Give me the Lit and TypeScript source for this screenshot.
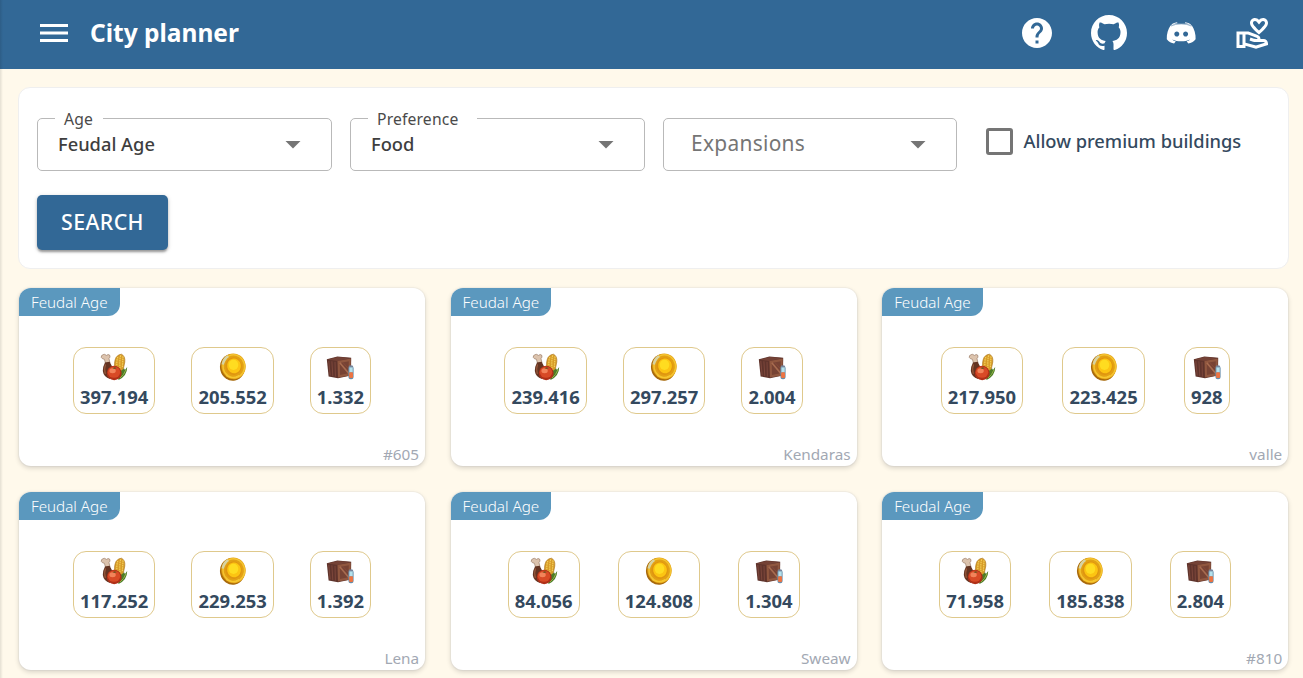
import { LitElement, html, css, svg } from "lit";
import { customElement, property } from "lit/decorators.js";

const food = svg`
  <path d="M1.6 2.6 Q.4 4.6 2.6 5.8 L4.4 6.3 L5.4 10 L10 10 L9 5.6 Q10.8 4.2 9.6 2 Q8 .8 6.6 2.4 Q4 .6 3.2 1.6Z" fill="#dcc3ad" stroke="#8e6f59" stroke-width=".6"/>
  <path d="M5 9.5 L9.6 8.8 Q12 13 13 16 L10 26 Q3.6 24 2.8 18 Q2.6 14 5 9.5Z" fill="#643422"/>
  <path d="M5.6 11.5 Q3.8 16 5.4 21" fill="none" stroke="#94573a" stroke-width="1.2"/>
  <path d="M15 18 Q13.6 9 16 4.6 Q17.8 1.4 21.4 1.2 Q25.4 3 24.8 9 Q24 16 21 21Z" fill="#d79c28" stroke="#a77118" stroke-width=".6"/>
  <path d="M17.8 4 Q16.2 9 17.2 15 M20.6 2.4 Q19.2 9 20.2 17 M23 3.4 Q22.6 9 22.4 15" fill="none" stroke="#f3cf5c" stroke-width="1.2" stroke-dasharray="1.5 .8"/>
  <path d="M27.2 14 Q27.2 23 18.5 27 Q17.5 22 20.5 18 Q23 17 24 15.3 L25 17Z" fill="#4d7b28"/>
  <path d="M25.8 17 Q24 22 20 25" fill="none" stroke="#8fb348" stroke-width="1"/>
  <ellipse cx="14.2" cy="20" rx="7.5" ry="7.2" fill="#b03018"/>
  <ellipse cx="14" cy="19.2" rx="6.2" ry="5.6" fill="#d84a26"/>
  <ellipse cx="12.6" cy="17.8" rx="3.2" ry="2.5" fill="#f2835a"/>
  <path d="M12.4 15.2 L14.6 14.2 L16.8 15.1 L14.8 15.9Z" fill="#6d5520"/>`;

const coin = svg`
  <ellipse cx="13.4" cy="14.3" rx="12.4" ry="13.4" transform="rotate(-12 13.4 14.3)" fill="#a86a0c"/>
  <ellipse cx="14.5" cy="13.3" rx="12.2" ry="12.9" transform="rotate(-12 14.5 13.3)" fill="#e3a114"/>
  <ellipse cx="14.8" cy="13.3" rx="10.8" ry="11.5" transform="rotate(-12 14.8 13.3)" fill="none" stroke="#f4c431" stroke-width="1.4"/>
  <path d="M2.5 11.2 Q3.6 4.8 8.4 2.2 L10 4 Q6 7 5 11.8Z" fill="#d7d3a2"/>
  <ellipse cx="14.6" cy="13.2" rx="8.2" ry="8.7" transform="rotate(-12 14.6 13.2)" fill="#df9510"/>
  <ellipse cx="15" cy="12.9" rx="6.9" ry="7.4" transform="rotate(-12 15 12.9)" fill="#fcc412"/>
  <ellipse cx="14.5" cy="11.8" rx="4.8" ry="5.1" fill="#ffdc20"/>
  <path d="M7 22.5 Q13 26.5 20 22.5" fill="none" stroke="#f8c92d" stroke-width="1"/>`;

const crate = svg`
  <path d="M.8 6.2 L11.4 3.5 L25.2 4.7 L25 22.6 L12 25.2 L2.6 23.4Z" fill="#5f342c"/>
  <path d="M1.3 6.6 L12 4.1 L24.6 5.1 L11.6 8Z" fill="#744236"/>
  <path d="M11.5 8 L24.8 5.6 L24.4 22.4 L12 24.6Z" fill="#90573f"/>
  <path d="M13.8 10 L22.8 8.2 L22.4 20.2 L14 22Z" fill="#774334"/>
  <path d="M13.8 9.8 L22.8 20.4" stroke="#a86c50" stroke-width="1.6"/>
  <path d="M17 9.6 L22.8 16" stroke="#85493a" stroke-width="1"/>
  <path d="M2.8 8 L4.2 22.4 M5.9 8.3 L6.8 23 M9 8.8 L9.4 23.6" stroke="#7c463b" stroke-width="1"/>
  <rect x="22.4" y="12.8" width="5.2" height="13.4" rx="2.3" fill="#668ca9"/>
  <rect x="23.4" y="14.2" width="3.3" height="5.2" fill="#b5e1ec"/>
  <rect x="23.1" y="19.2" width="3.9" height="5.8" rx="1" fill="#ec7443"/>
  <rect x="22.8" y="12.6" width="4.2" height="1.6" rx=".8" fill="#77849b"/>`;

const PICTURES = [food, coin, crate];

@customElement("plan-card")
export class PlanCard extends LitElement {
  @property() age = "";
  @property() owner = "";
  @property({ attribute: false }) stats: string[] = [];

  static styles = css`
    :host {
      display: flex;
      flex-direction: column;
      box-sizing: border-box;
      height: 178px;
      background: #fff;
      border-radius: 12px;
      box-shadow: 0 0 0 1px rgba(90, 120, 150, 0.05), 0 2px 5px rgba(0, 0, 0, 0.16);
    }
    .age {
      align-self: flex-start;
      box-sizing: border-box;
      height: 28px;
      padding: 0 12px;
      line-height: 28px;
      border-radius: 12px 0 12px 0;
      background: #5b98be;
      color: #fff;
      font-size: 15.2px;
      font-weight: 300;
    }
    .stats {
      display: grid;
      grid-template-columns: 1.5fr auto 1fr auto 1fr auto 1.5fr;
      margin-top: 31px;
    }
    .stat {
      box-sizing: border-box;
      height: 67px;
      padding: 5px 6.1px 0;
      border: 1px solid #dfc98c;
      border-radius: 13px;
      display: flex;
      flex-direction: column;
      align-items: center;
      font-size: 18.4px;
      line-height: 32px;
      font-weight: 700;
      color: #34495e;
    }
    .stat:nth-child(1) { grid-column: 2; }
    .stat:nth-child(2) { grid-column: 4; }
    .stat:nth-child(3) { grid-column: 6; }
    .stat svg { width: 28px; height: 28px; flex: none; }
    .owner {
      margin-top: auto;
      padding: 0 6px 1px;
      text-align: right;
      font-size: 15.3px;
      line-height: 22px;
      color: #a2a8b3;
    }
  `;

  render() {
    return html`
      <div class="age">${this.age}</div>
      <div class="stats">
        ${this.stats.map(
          (value, i) => html`<div class="stat">
            <svg viewBox="0 0 28 28">${PICTURES[i]}</svg>
            <span>${value}</span>
          </div>`
        )}
      </div>
      <div class="owner">${this.owner}</div>
    `;
  }
}

@customElement("select-field")
export class SelectField extends LitElement {
  @property() label = "";
  @property() value = "";

  static styles = css`
    :host {
      position: relative;
      box-sizing: border-box;
      display: flex;
      align-items: center;
      justify-content: space-between;
      height: 53px;
      padding: 0 30px 0 20px;
      border: 1px solid #b9b9b9;
      border-radius: 5px;
      color: #3e3e3e;
      font-weight: 500;
      font-size: 18.3px;
    }
    .label {
      position: absolute;
      top: -12px;
      left: 17px;
      padding: 0 10px 0 9px;
      background: #fff;
      font-size: 15.7px;
      line-height: 24px;
      font-weight: 400;
      letter-spacing: 0.16px;
      color: #4a4a4a;
    }
    .label.wide { padding-right: 19px; }
    .value { padding-bottom: 2px; }
    .placeholder {
      padding: 0 0 3px 7px;
      font-size: 20.9px;
      font-weight: 400;
      letter-spacing: 0.3px;
      color: #757575;
    }
    .arrow { width: 16px; height: 8px; fill: #757575; }
  `;

  render() {
    return html`
      ${this.value
        ? html`<span class="label ${this.label.length > 5 ? "wide" : ""}">${this.label}</span>
            <span class="value">${this.value}</span>`
        : html`<span class="placeholder">${this.label}</span>`}
      <svg class="arrow" viewBox="0 0 16 8"><path d="M.5 0h15L8 7.5z" /></svg>
    `;
  }
}

const PLANS = [
  { owner: "#605", stats: ["397.194", "205.552", "1.332"] },
  { owner: "Kendaras", stats: ["239.416", "297.257", "2.004"] },
  { owner: "valle", stats: ["217.950", "223.425", "928"] },
  { owner: "Lena", stats: ["117.252", "229.253", "1.392"] },
  { owner: "Sweaw", stats: ["84.056", "124.808", "1.304"] },
  { owner: "#810", stats: ["71.958", "185.838", "2.804"] },
];

@customElement("app-root")
export class AppRoot extends LitElement {
  static styles = css`
    :host {
      display: block;
      box-sizing: border-box;
      height: 678px;
      overflow: hidden;
      background: #fff9eb;
      font-family: "Noto Sans", sans-serif;
      position: relative;
    }
    .edge {
      position: absolute;
      left: 0;
      top: 0;
      width: 3px;
      height: 100%;
      background: linear-gradient(90deg, rgba(0, 0, 0, 0.1), rgba(0, 0, 0, 0));
    }
    header {
      box-sizing: border-box;
      height: 69px;
      padding: 0 32px 3px 36px;
      display: flex;
      align-items: center;
      background: #326896;
      color: #fff;
    }
    header svg { width: 36px; height: 36px; fill: currentColor; flex: none; }
    h1 {
      margin: 0 auto 0 18px;
      font-size: 24.5px;
      line-height: 36px;
      font-weight: 700;
    }
    .links { display: flex; gap: 36px; }
    main { padding: 18px 14px 0 18px; }
    .filters {
      box-sizing: border-box;
      height: 182px;
      padding: 30px 18px 0;
      background: #fff;
      border: 1px solid #efefef;
      border-radius: 12px;
    }
    .row {
      display: grid;
      grid-template-columns: 295px 295px 294px auto;
      column-gap: 18px;
    }
    .check {
      display: flex;
      align-items: center;
      height: 46px;
      padding-left: 10.5px;
      gap: 11px;
      font-size: 18.3px;
      font-weight: 500;
      color: #34495e;
    }
    .check-text { padding-bottom: 2px; }
    .box {
      box-sizing: border-box;
      width: 27px;
      height: 27px;
      border: 3px solid #757575;
      border-radius: 3px;
    }
    .search {
      display: block;
      margin-top: 24px;
      width: 131px;
      height: 55px;
      padding: 0 0 2px;
      border: 0;
      border-radius: 5px;
      background: #326896;
      color: #fff;
      font: 500 21.3px/53px "Noto Sans", sans-serif;
      letter-spacing: 0.4px;
      box-shadow: 0 3px 2px -1px rgba(0, 0, 0, 0.2), 0 2px 3px rgba(0, 0, 0, 0.18), 0 1px 5px rgba(0, 0, 0, 0.14);
    }
    .plans {
      display: grid;
      grid-template-columns: repeat(3, 1fr);
      gap: 26px 25.5px;
      margin: 19px 0.8px 0 1px;
    }
  `;

  render() {
    return html`
      <header>
        <svg viewBox="0 0 36 36"><path d="M4 24h28v3H4zM4 16.500h28v3H4zM4 9h28v3H4z" transform="translate(0 0)" /></svg>
        <h1>City planner</h1>
        <nav class="links">
          <svg viewBox="0 0 24 24"><path d="M12 2C6.48 2 2 6.48 2 12s4.48 10 10 10 10-4.48 10-10S17.52 2 12 2zm1 17h-2v-2h2v2zm2.07-7.75-.9.92C13.45 12.9 13 13.5 13 15h-2v-.5c0-1.1.45-2.1 1.17-2.83l1.24-1.26c.37-.36.59-.86.59-1.41 0-1.1-.9-2-2-2s-2 .9-2 2H8c0-2.21 1.79-4 4-4s4 1.79 4 4c0 .88-.36 1.68-.93 2.25z" /></svg>
          <svg viewBox="0 0 16 16"><path d="M8 0C3.58 0 0 3.58 0 8c0 3.54 2.29 6.53 5.47 7.59.4.07.55-.17.55-.38 0-.19-.01-.82-.01-1.49-2.01.37-2.53-.49-2.69-.94-.09-.23-.48-.94-.82-1.13-.28-.15-.68-.52-.01-.53.63-.01 1.08.58 1.23.82.72 1.21 1.87.87 2.33.66.07-.52.28-.87.51-1.07-1.78-.2-3.64-.89-3.64-3.95 0-.87.31-1.59.82-2.15-.08-.2-.36-1.02.08-2.12 0 0 .67-.21 2.2.82.64-.18 1.32-.27 2-.27s1.36.09 2 .27c1.53-1.04 2.2-.82 2.2-.82.44 1.1.16 1.92.08 2.12.51.56.82 1.27.82 2.15 0 3.07-1.87 3.75-3.65 3.95.29.25.54.73.54 1.48 0 1.07-.01 1.93-.01 2.2 0 .21.15.46.55.38A8.01 8.01 0 0 0 16 8c0-4.42-3.58-8-8-8" /></svg>
          <svg viewBox="0 0 36 36">
            <path fill-rule="evenodd" d="M9.2 9.6C11 9 14 8.7 18.2 8.7S25.4 9 27.2 9.6L29 10.8C31.2 14.2 32.9 19 32.6 24.3C30.6 26.7 28 28.2 25.3 28.4L23.6 26.3C25 25.9 26.3 25.3 27.2 24.4C24.5 25.7 21.4 26.3 18.2 26.3S11.900 25.7 9.2 24.4C10.1 25.3 11.4 25.9 12.8 26.3L11.1 28.4C8.4 28.2 5.8 26.7 3.8 24.3C3.5 19 5.2 14.2 7.4 10.8ZM13.8 16.4C12.4 16.4 11.3 17.5 11.3 19S12.4 21.6 13.8 21.6S16.3 20.5 16.3 19S15.2 16.4 13.8 16.4ZM22.6 16.4C21.2 16.4 20.1 17.5 20.1 19S21.2 21.6 22.6 21.6S25.1 20.5 25.1 19S24 16.4 22.6 16.4Z" />
            <path d="M8.6 9.3Q11 7.6 14 7.2L14.6 8.2Q11.5 8.6 9 9.9ZM27.8 9.3Q25.4 7.6 22.4 7.2L21.8 8.2Q24.9 8.6 27.4 9.9Z" />
            <path d="M8 11Q12 8.9 18.2 8.9T28.4 11" fill="none" stroke="#326896" stroke-width=".7" opacity=".7" />
          </svg>
          <svg viewBox="0 0 24 24"><path fill-rule="evenodd" d="M16 13c3.09-2.81 6-5.44 6-7.7C22 3.45 20.55 2 18.7 2c-1.04 0-2.05.49-2.7 1.25C15.34 2.49 14.34 2 13.3 2 11.45 2 10 3.45 10 5.3c0 2.26 2.91 4.89 6 7.7zm-2.7-9c.44 0 .89.21 1.18.55L16 6.34l1.52-1.79c.29-.34.74-.55 1.18-.55.74 0 1.3.56 1.3 1.3 0 1.12-2.04 3.17-4 4.99-1.96-1.82-4-3.88-4-4.99 0-.74.56-1.3 1.3-1.3zM19 16h-2c0-1.2-.75-2.28-1.87-2.7L8.97 11H1v11h6v-1.44l7 1.94 8-2.5v-1c0-1.66-1.34-3-3-3zM3 20v-7h2v7H3zm10.97.41L7 18.48V13h1.61l5.82 2.17c.34.13.57.46.57.83 0 0-1.99-.05-2.3-.15l-2.38-.79-.63 1.9 2.38.79c.51.17 1.04.26 1.58.26H19c.39 0 .74.23.9.56l-5.93 1.84z" /></svg>
        </nav>
      </header>
      <main>
        <section class="filters">
          <div class="row">
            <select-field label="Age" value="Feudal Age"></select-field>
            <select-field label="Preference" value="Food"></select-field>
            <select-field label="Expansions"></select-field>
            <div class="check"><span class="box"></span><span class="check-text">Allow premium buildings</span></div>
          </div>
          <button class="search">SEARCH</button>
        </section>
        <section class="plans">
          ${PLANS.map(
            (p) => html`<plan-card age="Feudal Age" .owner=${p.owner} .stats=${p.stats}></plan-card>`
          )}
        </section>
      </main>
      <div class="edge"></div>
    `;
  }
}
